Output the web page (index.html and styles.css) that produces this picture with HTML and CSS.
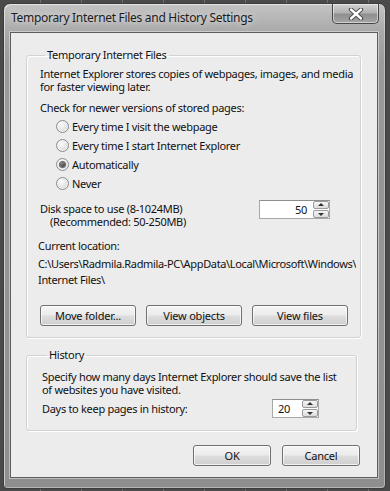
FILE: index.html
```html
<!DOCTYPE html>
<html>
<head>
<meta charset="utf-8">
<link rel="stylesheet" href="styles.css">
</head>
<body>
<div class="window">
  <div class="titlebar">
    <span class="title">Temporary Internet Files and History Settings</span>
    <div class="close">
      <svg width="18" height="12" viewBox="0 0 18 12">
        <path d="M4 1.5 L14 10.5 M14 1.5 L4 10.5" stroke="#3a3a3a" stroke-width="4.2" stroke-linecap="round"/>
        <path d="M4 1.5 L14 10.5 M14 1.5 L4 10.5" stroke="#ffffff" stroke-width="2.4" stroke-linecap="round"/>
      </svg>
    </div>
  </div>
  <div class="client">
    <fieldset class="group group-tif">
      <legend>Temporary Internet Files</legend>
      <p class="text first">Internet Explorer stores copies of webpages, images, and media<br>for faster viewing later.</p>
      <p class="text check">Check for newer versions of stored pages:</p>
      <div class="radios">
        <div class="radio-row"><span class="radio"></span><span>Every time I visit the webpage</span></div>
        <div class="radio-row"><span class="radio"></span><span>Every time I start Internet Explorer</span></div>
        <div class="radio-row"><span class="radio checked"></span><span>Automatically</span></div>
        <div class="radio-row"><span class="radio"></span><span>Never</span></div>
      </div>
      <div class="disk-row">
        <div class="text disk-text">Disk space to use (8-1024MB)<br><span class="indent">(Recommended: 50-250MB)</span></div>
        <div class="spinner spinner-disk">
          <span class="spin-value right">50</span>
          <span class="spin-btns"><span class="spin-up"></span><span class="spin-down"></span></span>
        </div>
      </div>
      <p class="text location">Current location:</p>
      <p class="path">C:\Users\Radmila.Radmila-PC\AppData\Local\Microsoft\Windows\<br>Internet Files\</p>
      <div class="btn-row">
        <button class="btn wide">Move folder...</button>
        <button class="btn wide">View objects</button>
        <button class="btn wide">View files</button>
      </div>
    </fieldset>
    <fieldset class="group group-history">
      <legend>History</legend>
      <p class="text first hist">Specify how many days Internet Explorer should save the list<br>of websites you have visited.</p>
      <div class="days-row">
        <span class="text">Days to keep pages in history:</span>
        <div class="spinner spinner-days">
          <span class="spin-value">20</span>
          <span class="spin-btns"><span class="spin-up"></span><span class="spin-down"></span></span>
        </div>
      </div>
    </fieldset>
    <div class="footer">
      <button class="btn dlg">OK</button>
      <button class="btn dlg">Cancel</button>
    </div>
  </div>
</div>
</body>
</html>
```
FILE: styles.css
```css
* { box-sizing: border-box; }
html, body { margin: 0; padding: 0; }
body {
  width: 390px;
  height: 491px;
  overflow: hidden;
  background: repeating-linear-gradient(90deg, #4a4a4a 0, #4a4a4a 40px, #6e6e6e 40px, #6e6e6e 41px);
  font-family: "Noto Sans", "Open Sans", sans-serif;
  font-size: 11px;
  letter-spacing: -0.3px;
  color: #111;
  padding-top: 3px;
  padding-left: 3px;
}
.window {
  width: 383px;
  height: 486px;
  border: 1px solid #3c3c3c;
  border-radius: 7px 7px 4px 4px;
  background: linear-gradient(180deg, #c4c4c4 0, #a9a9a9 28px, #9a9a9a 60px, #8e8e8e 100%);
  box-shadow: inset 1px 1px 0 rgba(255,255,255,0.55), inset -1px -1px 0 rgba(255,255,255,0.35);
  padding: 0 7px 0 6px;
  display: flex;
  flex-direction: column;
}
.titlebar {
  height: 28px;
  display: flex;
  justify-content: space-between;
  align-items: flex-start;
}
.title {
  margin-top: 6px;
  margin-left: 1px;
  color: #1c1c1c;
  font-size: 12px;
  line-height: 16px;
  text-shadow: 0 0 6px rgba(255,255,255,0.9);
}
.close {
  width: 47px;
  height: 20px;
  margin-right: -1px;
  border: 1px solid #474747;
  border-top: none;
  border-radius: 0 0 5px 5px;
  background: linear-gradient(180deg, #d0d0d0 0, #b2b2b2 45%, #8f8f8f 55%, #a5a5a5 100%);
  box-shadow: inset 0 0 0 1px rgba(255,255,255,0.5);
  display: flex;
  align-items: center;
  justify-content: center;
}
.client {
  height: 446px;
  background: #ececec;
  border: 1px solid #5e5e5e;
  box-shadow: 0 0 0 1px rgba(255,255,255,0.4);
  padding: 14px 16px 0 15px;
  display: flex;
  flex-direction: column;
}
.group {
  margin: 0;
  border: 1px solid #d2d2d2;
  box-shadow: inset 1px 1px 0 #fff, 1px 1px 0 #fff;
  border-radius: 3px;
  padding: 0 0 0 13px;
  min-width: 0;
}
.group legend {
  padding: 0 2px;
  margin-left: 5px;
  line-height: 16px;
  color: #111;
}
.group-tif {
  width: 335px;
  height: 291px;
}
.group-history {
  width: 331px;
  height: 84px;
  margin-top: 9px;
  padding-left: 15px;
}
.text, .path {
  margin: 0;
  line-height: 13px;
  white-space: nowrap;
}
.text.first { margin-top: 4px; }
.text.first.hist { margin-top: 7px; }
.check { margin-top: 8px; }
.radios {
  margin-top: 3px;
  padding-left: 16px;
}
.radio-row {
  height: 19px;
  display: flex;
  align-items: center;
  gap: 3px;
}
.radio {
  width: 13px;
  height: 13px;
  border-radius: 50%;
  border: 1px solid #8b8b8b;
  background: radial-gradient(circle at 40% 35%, #fdfdfd 0, #e2e2e2 55%, #cfcfcf 100%);
  box-shadow: inset 0 0 0 1px #f4f4f4;
  display: flex;
  align-items: center;
  justify-content: center;
}
.radio.checked::after {
  content: "";
  width: 5px;
  height: 5px;
  border-radius: 50%;
  background: radial-gradient(circle at 40% 35%, #8a8a8a, #262626);
  box-shadow: 0 0 0 1px #6a6a6a;
}
.disk-row {
  margin-top: 7px;
  display: flex;
  justify-content: space-between;
  align-items: flex-start;
  padding-right: 30px;
}
.disk-text { padding-top: 2px; }
.indent { padding-left: 10px; }
.spinner {
  height: 19px;
  background: #fff;
  border: 1px solid #a8a8a8;
  border-top-color: #8e8e8e;
  display: flex;
  align-items: stretch;
}
.spinner-disk { width: 71px; }
.spinner-days { width: 47px; }
.spin-value {
  flex: 1;
  line-height: 17px;
  padding: 0 6px 0 5px;
}
.spin-value.right { text-align: right; }
.spin-btns {
  width: 16px;
  display: flex;
  flex-direction: column;
  gap: 1px;
}
.spin-up, .spin-down {
  flex: 1;
  border: 1px solid #9a9a9a;
  border-radius: 2px;
  background: linear-gradient(180deg, #f6f6f6, #dcdcdc);
  position: relative;
}
.spin-up::after, .spin-down::after {
  content: "";
  position: absolute;
  left: 50%;
  top: 50%;
  margin-left: -3px;
  border-left: 3px solid transparent;
  border-right: 3px solid transparent;
}
.spin-up::after { border-bottom: 3px solid #333; margin-top: -2px; }
.spin-down::after { border-top: 3px solid #333; margin-top: -1px; }
.location {
  margin-top: 11px;
  margin-left: -2px;
}
.path {
  margin-top: 4px;
  margin-left: -2px;
  width: 318px;
  overflow: hidden;
  line-height: 16px;
  letter-spacing: -0.35px;
}
.btn-row {
  margin-top: 17px;
  display: flex;
  gap: 10px;
}
.btn {
  height: 21px;
  border: 1px solid #707070;
  border-radius: 3px;
  background: linear-gradient(180deg, #f4f4f4 0, #ececec 48%, #dddddd 52%, #cfcfcf 100%);
  box-shadow: inset 0 0 0 1px rgba(255,255,255,0.7);
  font-family: inherit;
  font-size: 11px;
  letter-spacing: -0.2px;
  color: #111;
  padding: 0;
  line-height: 17px;
}
.btn.wide { width: 96px; }
.btn.dlg { width: 78px; }
.days-row {
  margin-top: 3px;
  display: flex;
  align-items: center;
  justify-content: space-between;
  padding-right: 37px;
}
.footer {
  margin-top: 14px;
  display: flex;
  justify-content: flex-end;
  gap: 11px;
  padding-right: 1px;
}
```
